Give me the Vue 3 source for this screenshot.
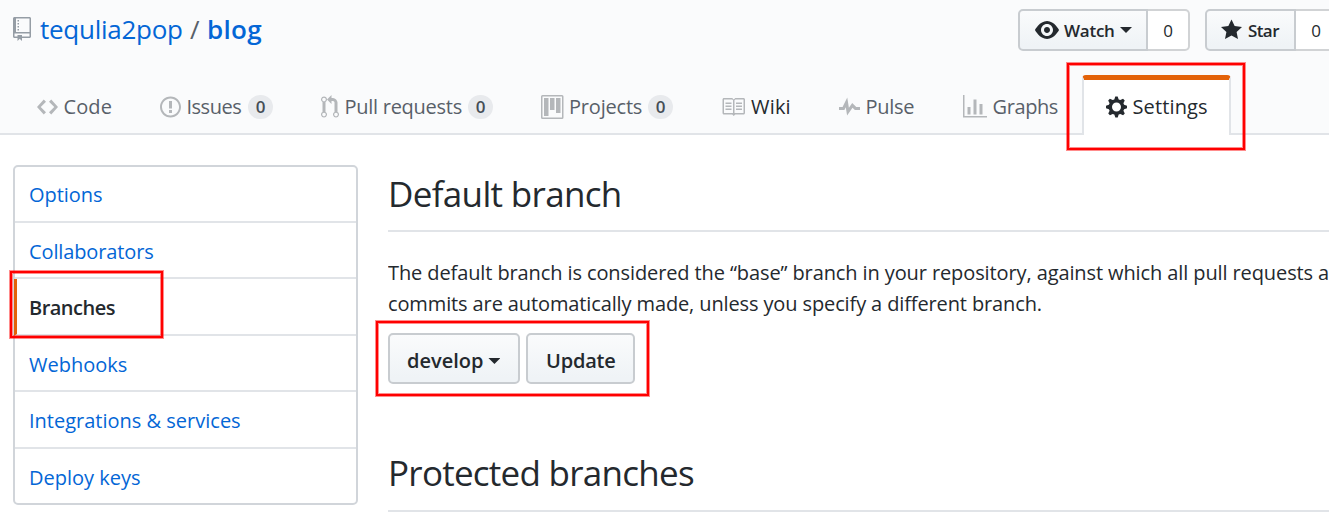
<script setup>
const icons = {
  repo: { w: 12, d: 'M4 9H3V8h1v1zm0-3H3v1h1V6zm0-2H3v1h1V4zm0-2H3v1h1V2zm8-1v12c0 .55-.45 1-1 1H6v2l-1.5-1.5L3 16v-2H1c-.55 0-1-.45-1-1V1c0-.55.45-1 1-1h10c.55 0 1 .45 1 1zm-1 10H1v2h2v-1h3v1h5v-2zm0-10H2v9h9V1z' },
  eye: { w: 16, d: 'M8.06 2C3 2 0 8 0 8s3 6 8.06 6C13 14 16 8 16 8s-3-6-7.94-6zM8 12c-2.2 0-4-1.78-4-4 0-2.2 1.8-4 4-4 2.22 0 4 1.8 4 4 0 2.22-1.78 4-4 4zm2-4c0 1.11-.89 2-2 2-1.11 0-2-.89-2-2 0-1.11.89-2 2-2 1.11 0 2 .89 2 2z' },
  star: { w: 14, d: 'M14 6l-4.9-.64L7 1 4.9 5.36 0 6l3.6 3.26L2.67 14 7 11.67 11.33 14l-.93-4.74z' },
}
const tabs = [
  { id: 'code', label: 'Code', w: 14, d: 'M9.5 3L8 4.5 11.5 8 8 11.5 9.5 13 14 8 9.5 3zm-5 0L0 8l4.5 5L6 11.5 2.5 8 6 4.5 4.5 3z' },
  { id: 'issues', label: 'Issues', count: 0, w: 14, d: 'M7 2.3c3.14 0 5.7 2.56 5.7 5.7s-2.56 5.7-5.7 5.7A5.71 5.71 0 0 1 1.3 8c0-3.14 2.56-5.7 5.7-5.7zM7 1C3.14 1 0 4.14 0 8s3.14 7 7 7 7-3.14 7-7-3.14-7-7-7zm1 3H6v5h2V4zm0 6H6v2h2v-2z' },
  { id: 'pulls', label: 'Pull requests', count: 0, w: 12, d: 'M11 11.28V5c-.03-.78-.34-1.47-.94-2.06C9.46 2.35 8.78 2.03 8 2H7V0L4 3l3 3V4h1c.27.02.48.11.69.31.21.2.3.42.31.69v6.28A1.993 1.993 0 0 0 10 15a1.993 1.993 0 0 0 1-3.72zm-1 2.92c-.66 0-1.2-.55-1.2-1.2 0-.65.55-1.2 1.2-1.2.65 0 1.2.55 1.2 1.2 0 .65-.55 1.2-1.2 1.2zM4 3c0-1.11-.89-2-2-2a1.993 1.993 0 0 0-1 3.72v6.56A1.993 1.993 0 0 0 2 15a1.993 1.993 0 0 0 1-3.72V4.72c.59-.34 1-.98 1-1.72zm-.8 10c0 .66-.55 1.2-1.2 1.2-.65 0-1.2-.55-1.2-1.2 0-.65.55-1.2 1.2-1.2.65 0 1.2.55 1.2 1.2zM2 4.2C1.34 4.2.8 3.65.8 3c0-.65.55-1.2 1.2-1.2.65 0 1.2.55 1.2 1.2 0 .65-.55 1.2-1.2 1.2z' },
  { id: 'projects', label: 'Projects', count: 0, w: 15, d: 'M10 12h3V2h-3v10zm-4-2h3V2H6v8zm-4 4h3V2H2v12zm-1 1h13V1H1v14zM14 0H1a1 1 0 0 0-1 1v14a1 1 0 0 0 1 1h13a1 1 0 0 0 1-1V1a1 1 0 0 0-1-1z' },
  { id: 'wiki', label: 'Wiki', w: 16, d: 'M3 5h4v1H3V5zm0 3h4V7H3v1zm0 2h4V9H3v1zm11-5h-4v1h4V5zm0 2h-4v1h4V7zm0 2h-4v1h4V9zm2-6v9c0 .55-.45 1-1 1H9.5l-1 1-1-1H2c-.55 0-1-.45-1-1V3c0-.55.45-1 1-1h5.5l1 1 1-1H15c.55 0 1 .45 1 1zm-8 .5L7.5 3H2v9h6V3.5zm7-.5H9.5l-.5.5V12h6V3z' },
  { id: 'pulse', label: 'Pulse', w: 14, d: 'M11.5 8L8.8 5.4 6.6 8.5 5.5 1.6 2.38 8H0v2h3.6l.9-1.8.9 5.4L9 8.5l1.6 1.5H14V8h-2.5z' },
  { id: 'graphs', label: 'Graphs', w: 16, d: 'M16 14v1H0V0h1v14h15zM5 13H3V8h2v5zm4 0H7V3h2v10zm4 0h-2V6h2v7z' },
  { id: 'settings', label: 'Settings', w: 14, d: 'M14 8.77v-1.6l-1.94-.64-.45-1.09.88-1.84-1.13-1.13-1.81.91-1.09-.45-.69-1.92h-1.6l-.63 1.94-1.11.45-1.84-.88-1.13 1.13.91 1.81-.45 1.09L0 7.23v1.59l1.94.64.45 1.09-.88 1.84 1.13 1.13 1.81-.91 1.09.45.69 1.92h1.59l.63-1.94 1.11-.45 1.84.88 1.13-1.13-.92-1.81.47-1.09L14 8.75v.02zM7 11c-1.66 0-3-1.34-3-3s1.34-3 3-3 3 1.34 3 3-1.34 3-3 3z' },
]
const menu = [
  { id: 'options', label: 'Options' },
  { id: 'collaborators', label: 'Collaborators' },
  { id: 'branches', label: 'Branches' },
  { id: 'webhooks', label: 'Webhooks' },
  { id: 'integrations', label: 'Integrations & services' },
  { id: 'keys', label: 'Deploy keys' },
]
</script>

<template>
  <div class="page">
    <header class="head">
      <div class="top">
        <svg class="repo-icon" width="18" height="24" viewBox="0 0 12 16"><path :d="icons.repo.d" /></svg>
        <h1 class="title">
          <a class="owner">tequlia2pop</a><span class="slash">/</span><a class="name">blog</a>
        </h1>
        <div class="social watch">
          <button class="btn small">
            <svg width="24" height="24" viewBox="0 0 16 16"><path :d="icons.eye.d" /></svg>
            <span>Watch</span><i class="caret"></i>
          </button>
          <a class="count">0</a>
        </div>
        <div class="social star">
          <button class="btn small">
            <svg width="21" height="24" viewBox="0 0 14 16"><path :d="icons.star.d" /></svg>
            <span>Star</span>
          </button>
          <a class="count">0</a>
        </div>
      </div>
      <nav class="tabs">
        <a v-for="t in tabs" :key="t.id" class="tab" :class="t.id">
          <svg :width="t.w * 1.5" height="24" :viewBox="`0 0 ${t.w} 16`"><path :d="t.d" /></svg>
          <span class="label">{{ t.label }}</span>
          <span v-if="t.count !== undefined" class="badge">{{ t.count }}</span>
        </a>
      </nav>
    </header>

    <div class="body">
      <aside class="menu">
        <a v-for="m in menu" :key="m.id" class="item" :class="m.id">{{ m.label }}</a>
      </aside>
      <main class="main">
        <h2 class="h-default">Default branch</h2>
        <p class="desc">
          <span class="l1">The default branch is considered the “base” branch in your repository, against which all pull requests a</span><br />
          <span class="l2">commits are automatically made, unless you specify a different branch.</span>
        </p>
        <div class="actions">
          <button class="btn develop"><span>develop</span><i class="caret"></i></button>
          <button class="btn update"><span>Update</span></button>
        </div>
        <h2 class="h-protected">Protected branches</h2>
      </main>
    </div>

    <div class="mark mark-settings"></div>
    <div class="mark mark-branches"></div>
    <div class="mark mark-actions"></div>
  </div>
</template>

<style>
body { margin: 0; overflow: hidden; }
</style>

<style scoped>
* { box-sizing: border-box; }
.page {
  position: relative;
  width: 1329px;
  height: 517px;
  overflow: hidden;
  background: #fff;
  color: #24292e;
  font-family: "Open Sans", "Noto Sans", sans-serif;
  font-size: 20px;
  white-space: nowrap;
}
svg { display: block; flex: none; fill: currentColor; }
h1, h2, p { margin: 0; font-weight: 400; }

.head {
  display: flex;
  flex-direction: column;
  height: 135px;
  background: #fafbfc;
  border-bottom: 2px solid #e1e4e8;
}
.top { display: flex; flex: none; height: 75px; }
.repo-icon { margin: 17px 0 0 13px; color: #959da5; }
.title {
  display: flex;
  flex: none;
  width: 987px;
  padding-left: 9px;
  margin-top: 11px;
  font-size: 26px;
  line-height: 36px;
}
.owner { width: 150px; color: #0366d6; letter-spacing: -0.27px; }
.slash { width: 17px; color: #586069; }
.name { color: #0366d6; font-weight: 600; letter-spacing: 0.3px; }

.btn {
  display: flex;
  align-items: center;
  padding: 0;
  border: 2px solid #c8ccd0;
  border-radius: 5px;
  background: linear-gradient(#fafbfc, #eff3f6 90%);
  color: #24292e;
  font-family: inherit;
  font-size: 20px;
  font-weight: 600;
}
.caret {
  width: 12px;
  height: 6px;
  background: #24292e;
  clip-path: polygon(0 0, 100% 0, 50% 100%);
}
.social { display: flex; flex: none; margin-top: 9px; height: 42px; }
.btn.small { height: 42px; font-size: 17px; border-radius: 5px 0 0 5px; }
.watch .btn { width: 130px; padding-left: 15px; }
.watch span { width: 52px; margin-left: 5px; letter-spacing: -0.25px; text-align: left; }
.watch .caret { margin-left: 4px; }
.star { margin-left: 15px; }
.star .btn { width: 91px; padding-left: 14px; }
.star span { margin-left: 6px; letter-spacing: -0.6px; }
.count {
  width: 42px;
  height: 42px;
  border: 2px solid #d1d3d5;
  border-left: 0;
  border-radius: 0 5px 5px 0;
  background: #fff;
  font-size: 17px;
  font-weight: 500;
  line-height: 39px;
  text-align: center;
}

.tabs { display: flex; flex: none; height: 60px; padding-left: 37px; }
.tab {
  display: flex;
  flex: none;
  align-items: center;
  height: 60px;
  padding-top: 4px;
  color: #586069;
}
.tab svg { color: #b4b7ba; }
.label { line-height: 28px; margin-left: 5.5px; }
.badge {
  width: 25px;
  height: 24px;
  border-radius: 12px;
  background: #e8eaed;
  color: #444d56;
  font-size: 17px;
  font-weight: 600;
  line-height: 24px;
  text-align: center;
}
.code { width: 123px; }
.code .label { letter-spacing: 0.1px; }
.issues { width: 161px; }
.issues .label { width: 61.5px; letter-spacing: -0.5px; }
.pulls { width: 220px; }
.pulls .label { width: 123.5px; letter-spacing: -0.27px; }
.projects { width: 180px; }
.projects svg { fill-rule: evenodd; }
.projects .label { width: 79px; letter-spacing: -0.2px; }
.wiki { width: 118px; color: #24292e; }
.wiki .label { margin-left: 6px; letter-spacing: 0.2px; }
.pulse { width: 124px; }
.pulse .label { letter-spacing: -0.3px; }
.graphs { width: 119px; }
.graphs .label { letter-spacing: -0.4px; }
.settings {
  width: 149px;
  padding: 0 0 2px 22px;
  border: 2px solid #e1e4e8;
  border-top: 5px solid #e36209;
  border-bottom: 0;
  border-radius: 4px 4px 0 0;
  background: #fff;
  color: #24292e;
  letter-spacing: 0.13px;
}
.tab.settings svg { color: #24292e; }

.body { display: flex; padding-left: 13px; }
.menu {
  display: grid;
  grid-template-rows: 56px 56px 57px 56px 57px 54px;
  width: 345px;
  height: 340px;
  margin-top: 30px;
  border: 2px solid #d1d5da;
  border-radius: 5px;
}
.item {
  padding-left: 14px;
  border-bottom: 2px solid #e1e4e8;
  color: #0366d6;
  line-height: 57px;
}
.item.options { line-height: 55px; letter-spacing: -0.05px; }
.item:last-child { border-bottom: 0; }
.item.collaborators { letter-spacing: -0.12px; }
.item.branches {
  padding-left: 12px;
  border-left: 3px solid #e36209;
  margin-left: -1px;
  color: #24292e;
  font-weight: 600;
  letter-spacing: -0.52px;
}

.main { flex: 1; margin-left: 30px; overflow: hidden; }
h2 { font-size: 35px; line-height: 48px; border-bottom: 2px solid #e1e4e8; }
.h-default { margin-top: 35px; height: 62px; letter-spacing: -0.67px; }
.h-protected { margin-top: 65px; height: 63px; letter-spacing: -0.74px; }
.desc { margin-top: 25px; height: 62px; line-height: 31px; }
.l1 { letter-spacing: -0.105px; }
.l2 { letter-spacing: -0.12px; }
.actions { display: flex; gap: 6px; margin-top: 14px; }
.actions .btn { height: 51px; padding-top: 3px; }
.btn.develop { width: 132px; padding-left: 17px; }
.develop .caret { margin-left: 5px; margin-top: 2px; }
.btn.update { width: 109px; padding-left: 18px; letter-spacing: -0.2px; }

.mark {
  position: absolute;
  border: 2px solid #f00;
  box-shadow: 0 0 0 1px rgba(255, 0, 0, 0.45), inset 0 0 0 1px rgba(255, 0, 0, 0.45);
}
.mark-settings { left: 1067px; top: 63px; width: 178px; height: 87px; }
.mark-branches { left: 10px; top: 271px; width: 153px; height: 67px; }
.mark-actions { left: 376px; top: 321px; width: 273px; height: 75px; }
</style>
